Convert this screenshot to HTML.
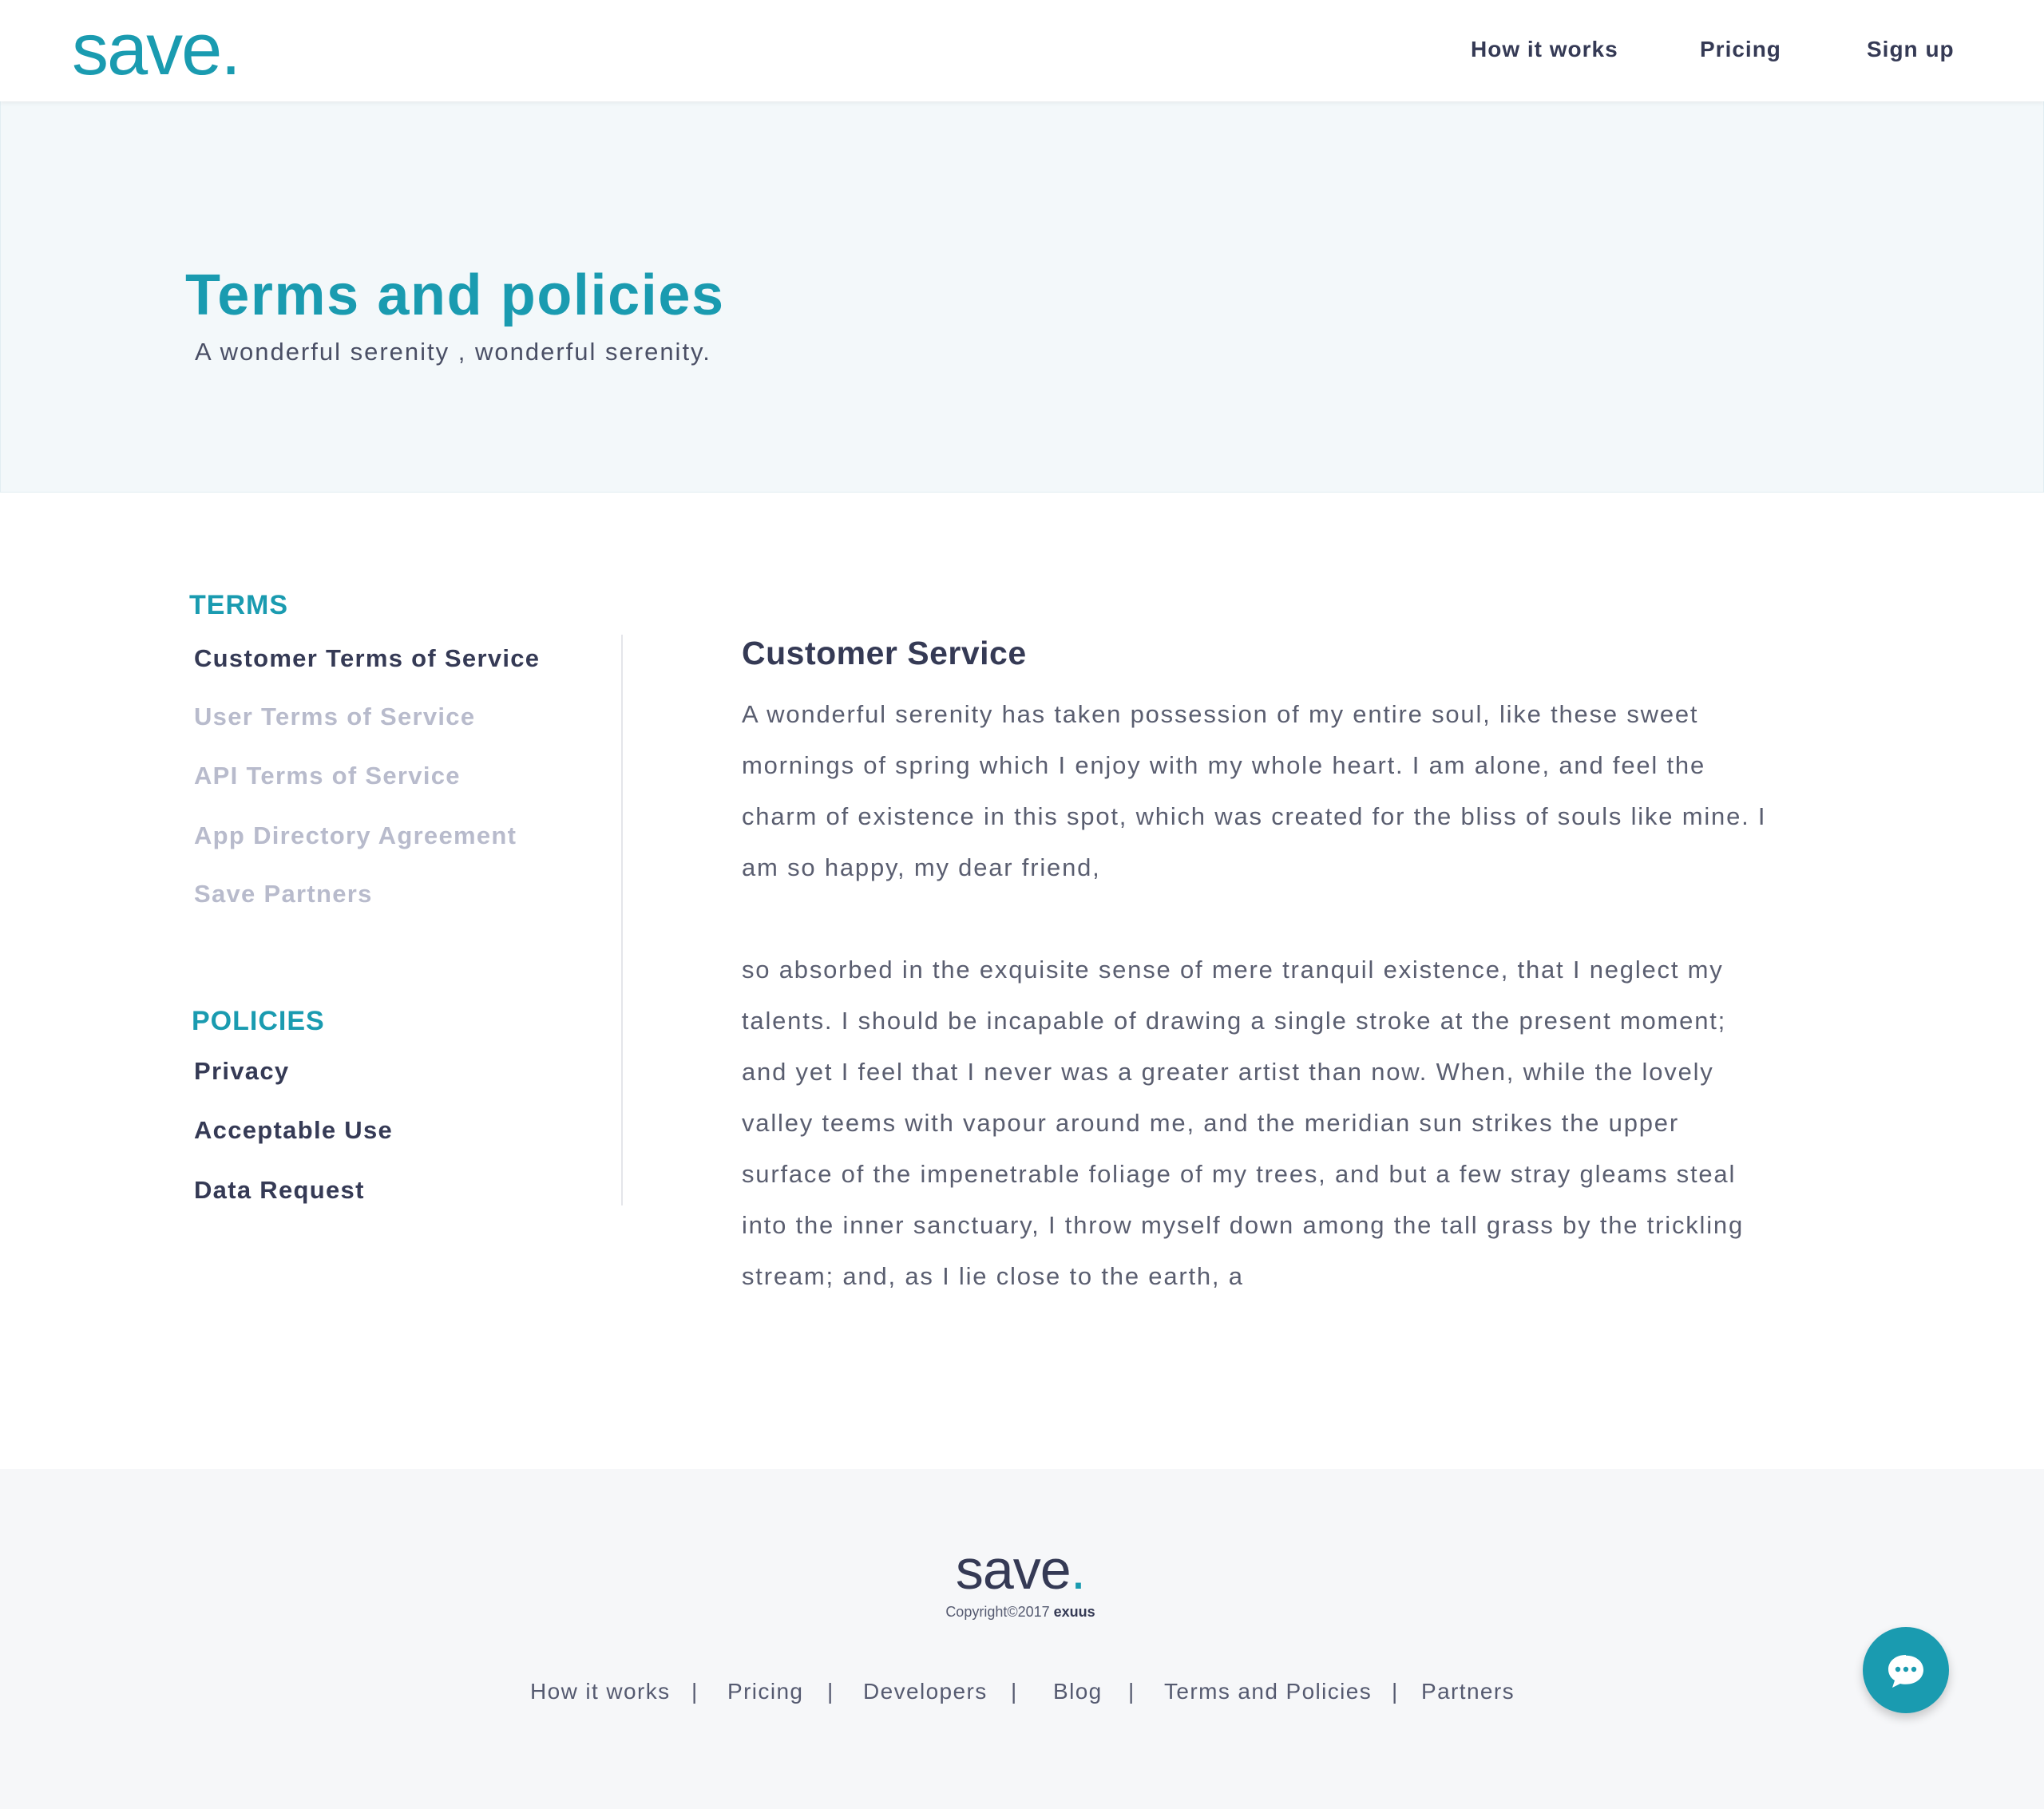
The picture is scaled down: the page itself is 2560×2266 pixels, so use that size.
<!DOCTYPE html>
<html><head><meta charset="utf-8"><style>
*{margin:0;padding:0;box-sizing:border-box}
body{width:2560px;height:2266px;position:relative;background:#fff;font-family:"Liberation Sans",sans-serif;overflow:hidden;color:#353a55}
.a{position:absolute;white-space:nowrap}
header{position:absolute;left:0;top:0;width:2560px;height:127px;background:#fff;box-shadow:0 2px 6px rgba(0,0,0,.06);z-index:2}
.nav{font-weight:bold;font-size:28px;line-height:40px;top:42px;color:#353a55;letter-spacing:1px}
.hero{position:absolute;left:0;top:127px;width:2560px;height:490px;background:#f3f8fa;border:1px solid #e2eef2;border-top:none}
.side{font-weight:bold;font-size:31px;line-height:40px;left:243px;letter-spacing:1.3px}
.g{color:#b8bbcc}
.p{left:929px;font-size:31px;line-height:64px;color:#5a5e70;letter-spacing:1.8px}
.footer{position:absolute;left:0;top:1840px;width:2560px;height:426px;background:#f6f7f9}
.fl{font-size:28px;line-height:40px;top:2099px;color:#555a70;letter-spacing:1.4px}
</style></head><body>
<header>
<div class="a" style="left:90px;top:12px;font-size:92px;line-height:100px;color:#1a9bb0;letter-spacing:-2px">save.</div>
<div class="a nav" style="left:1842px">How it works</div>
<div class="a nav" style="left:2129px">Pricing</div>
<div class="a nav" style="left:2338px">Sign up</div>
</header>
<div class="hero"></div>
<div class="a" style="left:232px;top:320px;font-size:72px;line-height:100px;color:#1a9bb0;font-weight:bold;letter-spacing:1.6px">Terms and policies</div>
<div class="a" style="left:244px;top:421px;font-size:31px;line-height:40px;color:#4a4f65;letter-spacing:2px">A wonderful serenity , wonderful serenity.</div>

<div class="a" style="left:237px;top:738px;font-size:34px;line-height:40px;color:#1a9bb0;font-weight:bold;letter-spacing:1px">TERMS</div>
<div class="a side" style="top:805px">Customer Terms of Service</div>
<div class="a side g" style="top:878px">User Terms of Service</div>
<div class="a side g" style="top:952px">API Terms of Service</div>
<div class="a side g" style="top:1027px">App Directory Agreement</div>
<div class="a side g" style="top:1100px">Save Partners</div>
<div class="a" style="left:240px;top:1259px;font-size:34px;line-height:40px;color:#1a9bb0;font-weight:bold;letter-spacing:1px">POLICIES</div>
<div class="a side" style="top:1322px">Privacy</div>
<div class="a side" style="top:1396px">Acceptable Use</div>
<div class="a side" style="top:1471px">Data Request</div>
<div class="a" style="left:778px;top:795px;width:2px;height:715px;background:#e4e5ea"></div>

<div class="a" style="left:929px;top:795px;font-size:41px;line-height:46px;color:#353a55;font-weight:bold;letter-spacing:.5px">Customer Service</div>
<div class="a p" style="top:863px">A wonderful serenity has taken possession of my entire soul, like these sweet<br>mornings of spring which I enjoy with my whole heart. I am alone, and feel the<br>charm of existence in this spot, which was created for the bliss of souls like mine. I<br>am so happy, my dear friend,</div>
<div class="a p" style="top:1183px">so absorbed in the exquisite sense of mere tranquil existence, that I neglect my<br>talents. I should be incapable of drawing a single stroke at the present moment;<br>and yet I feel that I never was a greater artist than now. When, while the lovely<br>valley teems with vapour around me, and the meridian sun strikes the upper<br>surface of the impenetrable foliage of my trees, and but a few stray gleams steal<br>into the inner sanctuary, I throw myself down among the tall grass by the trickling<br>stream; and, as I lie close to the earth, a</div>

<div class="footer"></div>
<div class="a" style="left:1178px;top:1926px;width:200px;text-align:center;font-size:70px;line-height:80px;color:#353a55;letter-spacing:-1px">save<span style="color:#1a9bb0">.</span></div>
<div class="a" style="left:1128px;top:2007px;width:300px;text-align:center;font-size:18px;line-height:24px;color:#555a70">Copyright©2017 <b style="color:#353a55">exuus</b></div>
<div class="a fl" style="left:664px">How it works</div>
<div class="a fl" style="left:866px">|</div>
<div class="a fl" style="left:911px">Pricing</div>
<div class="a fl" style="left:1036px">|</div>
<div class="a fl" style="left:1081px">Developers</div>
<div class="a fl" style="left:1266px">|</div>
<div class="a fl" style="left:1319px">Blog</div>
<div class="a fl" style="left:1413px">|</div>
<div class="a fl" style="left:1458px">Terms and Policies</div>
<div class="a fl" style="left:1743px">|</div>
<div class="a fl" style="left:1780px">Partners</div>

<div class="a" style="left:2333px;top:2038px;width:108px;height:108px;border-radius:50%;background:#1a9bb0;box-shadow:0 6px 12px rgba(0,0,0,.2)">
<svg width="108" height="108" viewBox="0 0 108 108"><path d="M54 35c-13 0-22 8-22 18 0 6 3 11 8 14l-3 9 10-5c2 .5 4 .8 7 .8 13 0 22-8 22-18s-9-18-22-18z" fill="#fff"/><circle cx="44" cy="53" r="3.2" fill="#1a9bb0"/><circle cx="54" cy="53" r="3.2" fill="#1a9bb0"/><circle cx="64" cy="53" r="3.2" fill="#1a9bb0"/></svg>
</div>
</body></html>
